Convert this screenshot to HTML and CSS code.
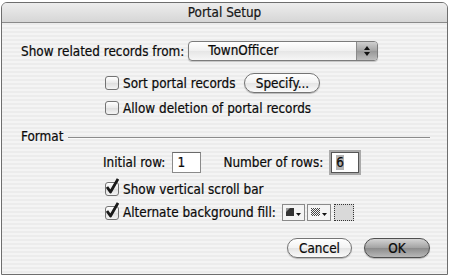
FILE: index.html
```html
<!DOCTYPE html>
<html lang="en">
<head>
    <meta charset="UTF-8">
    <title>Portal Setup</title>
    <link rel="stylesheet" href="styles.css">
</head>
<body>
    <div class="window">
        <div class="titlebar">Portal Setup</div>
        <div class="content">
            <div class="row source">
                <span class="label">Show related records from:</span>
                <div class="popup">
                    <span class="popup-value">TownOfficer</span>
                    <span class="popup-arrows">
                        <svg width="8" height="12" viewBox="0 0 8 12">
                            <path d="M4 1 L7 5 L1 5 Z" fill="#111"/>
                            <path d="M4 11 L7 7 L1 7 Z" fill="#111"/>
                        </svg>
                    </span>
                </div>
            </div>

            <div class="row sort indent">
                <span class="checkbox"></span>
                <span class="label">Sort portal records</span>
                <button class="pill specify">Specify...</button>
            </div>

            <div class="row allow indent">
                <span class="checkbox"></span>
                <span class="label">Allow deletion of portal records</span>
            </div>

            <div class="row format">
                <span class="label">Format</span>
                <span class="rule"></span>
            </div>

            <div class="row rows indent-text">
                <span class="label">Initial row:</span>
                <span class="field">1</span>
                <span class="label gap-label">Number of rows:</span>
                <span class="field focused"><span class="selected">6</span></span>
            </div>

            <div class="row scrollbar indent">
                <span class="checkbox checked">
                    <svg width="15" height="17" viewBox="0 0 15 17">
                        <path d="M3 9 L6.5 14 L14 1" fill="none" stroke="#1a1a1a" stroke-width="2.8" stroke-linejoin="round"/>
                    </svg>
                </span>
                <span class="label">Show vertical scroll bar</span>
            </div>

            <div class="row fill indent">
                <span class="checkbox checked">
                    <svg width="15" height="17" viewBox="0 0 15 17">
                        <path d="M3 9 L6.5 14 L14 1" fill="none" stroke="#1a1a1a" stroke-width="2.8" stroke-linejoin="round"/>
                    </svg>
                </span>
                <span class="label">Alternate background fill:</span>
                <span class="swatch pen">
                    <svg width="21" height="15" viewBox="0 0 21 15">
                        <path d="M3 3 L11 3 L11 11 L3 11 Z" fill="#333"/>
                        <path d="M3 3 L7 3 L3 7 Z" fill="#999"/>
                        <path d="M13 8 L18 8 L15.5 11 Z" fill="#111"/>
                    </svg>
                </span>
                <span class="swatch pattern">
                    <svg width="22" height="15" viewBox="0 0 22 15">
                        <defs>
                            <pattern id="checker" width="2" height="2" patternUnits="userSpaceOnUse">
                                <rect width="1" height="1" fill="#444"/>
                                <rect x="1" y="1" width="1" height="1" fill="#444"/>
                            </pattern>
                        </defs>
                        <rect x="3" y="3" width="9" height="8" fill="url(#checker)"/>
                        <path d="M14 8 L19 8 L16.5 11 Z" fill="#111"/>
                    </svg>
                </span>
                <span class="swatch color"></span>
            </div>

            <div class="row actions">
                <button class="pill cancel">Cancel</button>
                <button class="pill ok">OK</button>
            </div>
        </div>
    </div>
</body>
</html>
```

FILE: styles.css
```css
body {
    margin: 0;
    padding: 2px 0 0 1px;
    background-color: #ffffff;
    font-family: 'DejaVu Sans Condensed', 'DejaVu Sans', sans-serif;
    font-size: 13.4px;
    color: #0a0a0a;
    -webkit-text-stroke: 0.2px #0a0a0a;
}

.window {
    width: 445px;
    height: 271px;
    border: 1px solid #6e6e6e;
    border-radius: 6px 6px 0 0;
    overflow: hidden;
    background: repeating-linear-gradient(#ececec 0, #ececec 2px, #f4f4f4 2px, #f4f4f4 4px);
}

.titlebar {
    height: 19px;
    line-height: 19px;
    text-align: center;
    background: linear-gradient(#ededed, #d6d6d6);
    border-bottom: 1px solid #8a8a8a;
    color: #1a1a1a;
}

.content {
    padding: 0 17px 0 19px;
}

.row {
    display: flex;
    align-items: center;
}

.indent {
    padding-left: 84px;
}

.indent-text {
    padding-left: 82px;
}

.label {
    white-space: nowrap;
}

/* popup menu */
.source {
    margin-top: 18px;
    height: 20px;
}

.source .label {
    margin-right: 4px;
}

.popup {
    display: flex;
    width: 190px;
    height: 20px;
    box-sizing: border-box;
    border: 1px solid #7c7c7c;
    border-radius: 4px;
    background: linear-gradient(#ffffff, #f0f0f0 50%, #e6e6e6 51%, #f6f6f6);
    box-shadow: 0 1px 1px rgba(0, 0, 0, 0.2);
    overflow: hidden;
}

.popup-value {
    flex: 1;
    padding-left: 19px;
    line-height: 18px;
}

.popup-arrows {
    width: 20px;
    display: flex;
    align-items: center;
    justify-content: center;
    border-left: 1px solid #8a8a8a;
    background: linear-gradient(#cfcfcf, #a4a4a4 50%, #989898 51%, #bdbdbd);
}

/* checkboxes */
.checkbox {
    position: relative;
    width: 14px;
    height: 14px;
    box-sizing: border-box;
    margin-right: 4px;
    border: 1px solid #737373;
    border-radius: 3px;
    background: linear-gradient(#ffffff, #e9e9e9 50%, #dedede 51%, #f4f4f4);
    flex-shrink: 0;
}

.checkbox svg {
    position: absolute;
    left: -2px;
    top: -5px;
}

.sort {
    margin-top: 12px;
    height: 20px;
}

.allow {
    margin-top: 5px;
    height: 20px;
}

/* buttons */
.pill {
    height: 20px;
    box-sizing: border-box;
    padding: 0;
    border: 1px solid #747474;
    border-radius: 10px;
    font-family: 'DejaVu Sans Condensed', 'DejaVu Sans', sans-serif;
    font-size: 13.4px;
    color: #0a0a0a;
    -webkit-text-stroke: 0.2px #0a0a0a;
    background: linear-gradient(#ffffff, #f2f2f2 50%, #e4e4e4 51%, #fafafa);
    box-shadow: 0 1px 1px rgba(0, 0, 0, 0.25);
}

.specify {
    width: 76px;
    margin-left: 9px;
}

.cancel {
    width: 65px;
}

.ok {
    width: 66px;
    margin-left: 12px;
    border-color: #4f4f4f;
    background: linear-gradient(#d4d4d4, #a2a2a2 50%, #8c8c8c 51%, #b8b8b8);
}

/* section header */
.format {
    margin-top: 9px;
    height: 18px;
}

.rule {
    flex: 1;
    margin-left: 5px;
    margin-top: 3px;
    border-top: 1px solid #8c8c8c;
    border-bottom: 1px solid #fbfbfb;
}

/* text fields */
.rows {
    margin-top: 7px;
    height: 21px;
}

.field {
    width: 29px;
    height: 21px;
    box-sizing: border-box;
    margin-left: 7px;
    padding-left: 4px;
    border: 1px solid #8a8a8a;
    border-top-color: #6a6a6a;
    background-color: #ffffff;
    line-height: 19px;
}

.gap-label {
    margin-left: 22px;
}

.focused {
    width: 28px;
    margin-left: 8px;
    border-color: #555555;
    box-shadow: 0 0 0 2px #a9a9a9;
}

.selected {
    background-color: #b4b4b4;
}

.scrollbar {
    margin-top: 8px;
    height: 16px;
}

/* fill swatches */
.fill {
    margin-top: 7px;
    height: 17px;
}

.fill .label {
    margin-right: 6px;
}

.swatch {
    height: 17px;
    box-sizing: border-box;
    border: 1px solid #8a8a8a;
    background-color: #f4f4f4;
}

.pen {
    width: 23px;
}

.pattern {
    width: 24px;
    margin-left: 2px;
}

.color {
    width: 20px;
    margin-left: 3px;
    border: 1px dotted #333333;
    background-color: #d9d9d9;
}

.actions {
    margin-top: 17px;
    justify-content: flex-end;
}
```
